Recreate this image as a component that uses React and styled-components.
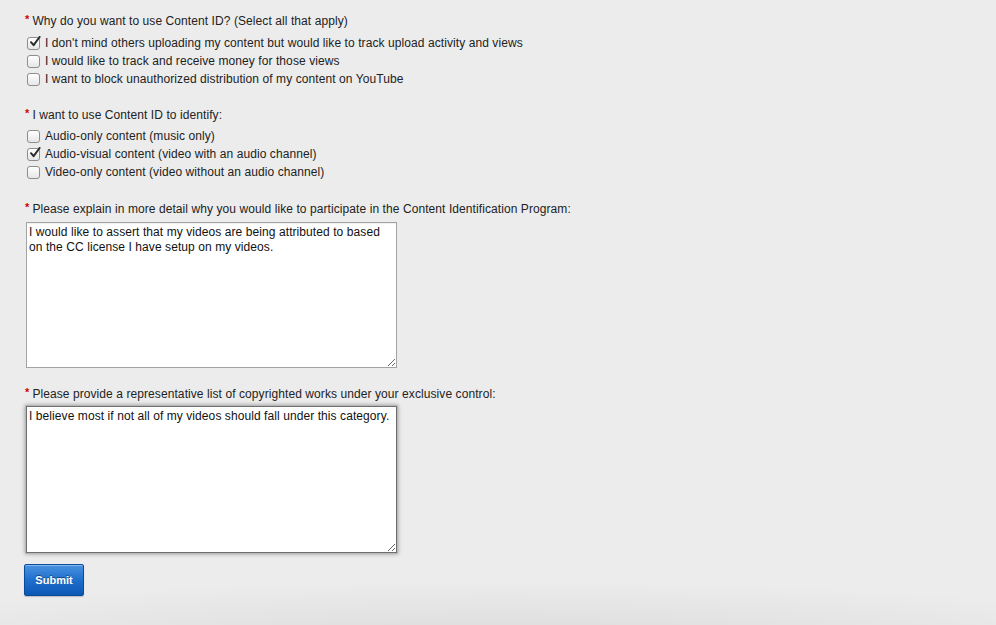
import styled, { createGlobalStyle } from "styled-components"

const Global = createGlobalStyle`
    html, body {
        margin: 0;
        padding: 0;
    }
    body {
        background: #ececec;
        font-family: "Liberation Sans", Arial, Helvetica, sans-serif;
        color: #222;
    }
`

const Page = styled.div`
    min-height: 625px;
    box-sizing: border-box;
    padding: 11px 0 0 24px;
    letter-spacing: 0.08px;
    background:
        radial-gradient(ellipse 70% 60px at 50% 640px, rgba(0,0,0,0.07), rgba(0,0,0,0) 100%),
        #ececec;
    overflow: hidden;
`

const Section = styled.div`
    margin-bottom: ${props => props.gap || 19}px;
`

const Question = styled.div`
    font-size: 12px;
    line-height: 16px;
    margin-bottom: ${props => props.gap || 5}px;
    color: #222;
`

const Star = styled.span`
    color: #d40000;
    font-size: 11px;
    font-weight: bold;
    vertical-align: 2px;
    margin: 0 3px 0 1px;
`

const Option = styled.label`
    display: flex;
    align-items: center;
    height: 18px;
    font-size: 12px;
    color: #222;
    padding-left: 3px;
`

const Box = styled.span`
    position: relative;
    width: 11px;
    height: 11px;
    border: 1px solid #8e8e8e;
    border-radius: 3px;
    background: linear-gradient(#ffffff, #e6e6e6);
    box-shadow: inset 0 1px 1px rgba(255,255,255,0.8), 0 0 1px rgba(0,0,0,0.1);
    margin-right: 5px;
    flex-shrink: 0;
`

const Tick = styled.svg`
    position: absolute;
    left: 1px;
    top: -2px;
    width: 12px;
    height: 12px;
`

const Area = styled.textarea`
    display: block;
    width: 371px;
    height: ${props => props.tall || 146}px;
    box-sizing: border-box;
    margin: 0 0 0 2px;
    padding: 2px 2px;
    font-family: "Liberation Sans", Arial, Helvetica, sans-serif;
    font-size: 12px;
    line-height: 15px;
    letter-spacing: 0.08px;
    color: #111;
    background: #fff;
    border: 1px solid ${props => props.focused ? "#6f6f6f" : "#a3a3a3"};
    box-shadow: ${props => props.focused
        ? "0 0 0 1px #b8b8b8, 0 0 4px 1px rgba(0,0,0,0.35)"
        : "inset 0 1px 0 rgba(0,0,0,0.06)"};
    resize: both;
    outline: none;
    border-radius: 0;
`

const Submit = styled.button`
    width: 60px;
    height: 32px;
    border: 1px solid #0a4b9c;
    border-radius: 2px;
    background: linear-gradient(#4a92e0, #1f6fcc 50%, #0c58b4);
    box-shadow: inset 0 1px 0 rgba(255,255,255,0.35), 0 1px 1px rgba(0,0,0,0.2);
    color: #fff;
    font-family: "Liberation Sans", Arial, Helvetica, sans-serif;
    font-size: 11px;
    font-weight: bold;
    text-shadow: 0 -1px 0 rgba(0,0,0,0.45);
    cursor: pointer;
    padding: 0;
`

const Check = ({ checked, children }) => (
    <Option>
        <Box>
            {checked && (
                <Tick viewBox="0 0 12 12">
                    <path d="M2 6.2 L4.6 9.2 L10.6 1" fill="none" stroke="#2b2b2b" strokeWidth="2" strokeLinecap="round" strokeLinejoin="round" />
                </Tick>
            )}
        </Box>
        {children}
    </Option>
)

const App = () => {
  return (
    <Page>
        <Global/>
        <Section gap={17}>
            <Question><Star>*</Star>Why do you want to use Content ID? (Select all that apply)</Question>
            <Check checked>I don't mind others uploading my content but would like to track upload activity and views</Check>
            <Check>I would like to track and receive money for those views</Check>
            <Check>I want to block unauthorized distribution of my content on YouTube</Check>
        </Section>
        <Section gap={18}>
            <Question gap={4}><Star>*</Star>I want to use Content ID to identify:</Question>
            <Check>Audio-only content (music only)</Check>
            <Check checked>Audio-visual content (video with an audio channel)</Check>
            <Check>Video-only content (video without an audio channel)</Check>
        </Section>
        <Section gap={16}>
            <Question gap={5}><Star>*</Star>Please explain in more detail why you would like to participate in the Content Identification Program:</Question>
            <Area readOnly defaultValue="I would like to assert that my videos are being attributed to based on the CC license I have setup on my videos." />
        </Section>
        <Section gap={11}>
            <Question gap={4}><Star>*</Star>Please provide a representative list of copyrighted works under your exclusive control:</Question>
            <Area focused readOnly tall={147} defaultValue="I believe most if not all of my videos should fall under this category." />
        </Section>
        <Submit>Submit</Submit>
    </Page>
  )
}

export default App
